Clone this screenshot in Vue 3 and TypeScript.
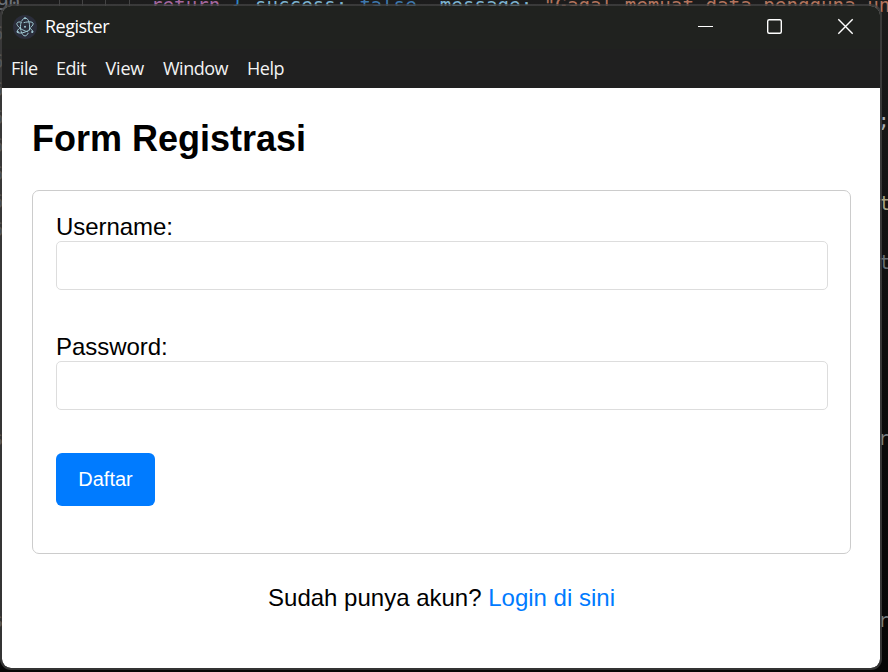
<script setup lang="ts">
import { ref } from 'vue'

interface CodeToken { text: string; kind: string }
interface Fragment { text: string; x: number; y: number; color: string }

const username = ref('')
const password = ref('')
const menus: string[] = ['File', 'Edit', 'View', 'Window', 'Help']

const tokens: CodeToken[] = [
  { text: 'return', kind: 'keyword' },
  { text: ' { ', kind: 'brace' },
  { text: 'success:', kind: 'prop' },
  { text: ' false', kind: 'bool' },
  { text: ', ', kind: 'plain' },
  { text: 'message:', kind: 'prop' },
  { text: ' "Gagal memuat data pengguna un', kind: 'str' },
]

// Pieces of the editor that show past the window's edges
const fragments: Fragment[] = [
  { text: '90', x: -3, y: -8, color: '#6c7178' },
  { text: ';', x: 878, y: 109, color: '#a9adb0' },
  { text: 't', x: 879, y: 192, color: '#a5a184' },
  { text: 't', x: 879, y: 251, color: '#666d73' },
  { text: 'r', x: 878, y: 427, color: '#777d82' },
  { text: 'r', x: 878, y: 609, color: '#777d82' },
  { text: 's', x: -8, y: 427, color: '#9b958d' },
  { text: 's', x: -8, y: 609, color: '#9b958d' },
  { text: '6', x: -8, y: 22, color: '#82868b' },
  { text: '6', x: -8, y: 50, color: '#82868b' },
  { text: '6', x: -8, y: 78, color: '#82868b' },
  { text: '6', x: -8, y: 106, color: '#82868b' },
  { text: '6', x: -8, y: 134, color: '#82868b' },
  { text: '6', x: -8, y: 162, color: '#82868b' },
  { text: '6', x: -8, y: 190, color: '#82868b' },
  { text: '6', x: -8, y: 218, color: '#82868b' },
]
const guides: number[] = [59, 82, 105, 129]
</script>

<template>
  <div class="desktop">
    <div class="editor" aria-hidden="true">
      <i v-for="g in guides" :key="g" class="guide" :style="{ left: g + 'px' }"></i>
      <div class="code"><span v-for="(t, i) in tokens" :key="i" :class="t.kind">{{ t.text }}</span></div>
      <span v-for="(f, i) in fragments" :key="i" class="fragment" :style="{ left: f.x + 'px', top: f.y + 'px', color: f.color }">{{ f.text }}</span>
    </div>

    <div class="window">
      <header class="titlebar">
        <svg class="logo" viewBox="0 0 24 24" width="24" height="24">
          <circle cx="12" cy="12" r="12" fill="#2b2e3b" />
          <g fill="none" stroke="#9fc9d3" stroke-width="1" stroke-linecap="round">
            <path d="M8.7 7.100C6.300 6.700 4.500 7 4 8c-.8 1.500 1.500 4.500 5.200 6.600 2 1.200 4 1.900 5.600 2.200" />
            <path d="M11 7.600c1-.3 2.200-.5 3.200-.6 3-.4 5.200 0 5.800 1 .6 1.100-.3 2.700-2.200 4.300" />
            <path d="M8.200 16.500c.8 2.700 2.200 4.400 3.800 4.400 1.200 0 2.300-1 3.100-2.600" />
            <path d="M16.500 15c.4-4.500-.1-7.600-1.200-9.700C14.500 3.900 13.400 3.100 12 3.100c-1.200 0-2.300 1-3.100 2.600" />
            <path d="M6.700 13C5 14.500 3.700 16 4.200 17c.5 1.100 2.800 1.300 5.600.7 3-.6 6-2.200 8-4.200" />
            <path d="M8 7.700c-.7 2.500-.7 5.300-.2 7.500M18 14.200c1.600 1.300 2.400 2.300 1.800 3" />
          </g>
          <g fill="#9fc9d3">
            <circle cx="12" cy="11.800" r="1" />
            <circle cx="4.800" cy="17" r="1.100" />
            <circle cx="19.200" cy="17" r="1.100" />
            <circle cx="12" cy="3.300" r="1" />
          </g>
        </svg>
        <span class="title">Register</span>
        <svg class="controls" viewBox="0 0 160 20" width="160" height="20" fill="none" stroke="#fff" stroke-width="1.400">
          <path d="M0 10.500H15" stroke-width="1" />
          <rect x="69.700" y="3.700" width="13.600" height="13.600" rx="1.500" />
          <path d="M140.300 3.300L154.700 17.700M154.700 3.300L140.300 17.700" />
        </svg>
      </header>
      <nav class="menubar">
        <span v-for="m in menus" :key="m" :class="'menu-' + m.toLowerCase()">{{ m }}</span>
      </nav>

      <main class="page">
        <h2>Form Registrasi</h2>
        <form @submit.prevent>
          <label for="username">Username:</label>
          <input id="username" v-model="username" type="text" />
          <label for="password">Password:</label>
          <input id="password" v-model="password" type="password" />
          <button type="submit">Daftar</button>
        </form>
        <p>Sudah punya akun? <a href="#">Login di sini</a></p>
      </main>
    </div>
  </div>
</template>

<style>
body { margin: 0; overflow: hidden; }
</style>

<style scoped>
* { box-sizing: border-box; }
.desktop {
  position: relative;
  width: 888px;
  height: 672px;
  overflow: hidden;
  background: linear-gradient(#1c1c1c 0, #171717 100px, #0b0b0b 400px, #060606 100%);
}
.editor { font: 19.200px/24px "DejaVu Sans Mono", monospace; }
.code { position: absolute; left: 151px; top: -6px; white-space: pre; }
.fragment { position: absolute; }
.guide { position: absolute; top: 0; width: 1px; height: 6px; background: #444; }
.keyword { color: #a5679f; }
.brace { color: #2d86c8; }
.prop { color: #7cb3d0; }
.bool { color: #3e78ae; }
.plain { color: #aaa; }
.str { color: #b3745d; }
.window {
  position: absolute;
  left: 0;
  top: 4px;
  width: 882px;
  height: 666px;
  display: flex;
  flex-direction: column;
  overflow: hidden;
  border: 2px solid rgba(68, 68, 68, .75);
  border-radius: 11px;
  background: #fff;
  background-clip: padding-box;
}
.titlebar {
  flex: 0 0 43px;
  display: flex;
  align-items: center;
  padding: 0 22px 3px 11px;
  background: #20221f;
  color: #fff;
  font: 18px/24px "Open Sans", sans-serif;
}
.logo { position: relative; top: 1px; }
.title { margin-left: 8px; letter-spacing: -.5px; }
.controls { margin-left: auto; }
.menubar {
  flex: 0 0 39px;
  display: flex;
  align-items: center;
  padding: 0 0 2px 9px;
  background: #202020;
  color: #f3f3f3;
  font: 18px/24px "Open Sans", sans-serif;
  letter-spacing: -.45px;
}
.menu-file { width: 45px; }
.menu-edit { width: 49.500px; }
.menu-view { width: 57.500px; letter-spacing: -.2px; }
.menu-window { width: 84px; letter-spacing: -.5px; }
.page {
  flex: 1;
  padding: 30px 29px 0 30px;
  color: #000;
  font: 24px/28px "Liberation Sans", Arial, sans-serif;
}
h2 { margin: 0 0 31px; font-size: 36px; line-height: 41px; }
form {
  height: 364px;
  padding: 22px 22px 0 23px;
  border: 1px solid #ccc;
  border-radius: 7px;
}
label { display: block; letter-spacing: -.05px; }
input {
  display: block;
  width: 100%;
  height: 49px;
  margin: 0 0 43px;
  padding: 12px;
  border: 1px solid #ddd;
  border-radius: 5px;
  background: #fff;
  font: inherit;
  outline: none;
}
button {
  display: block;
  width: 99px;
  height: 53px;
  padding: 0 0 2px;
  border: 0;
  border-radius: 6px;
  background: #007bff;
  color: #fff;
  font: 20px/24px "Liberation Sans", Arial, sans-serif;
}
p { margin: 30px 0 0; text-align: center; }
a { color: #007bff; text-decoration: none; }
</style>
